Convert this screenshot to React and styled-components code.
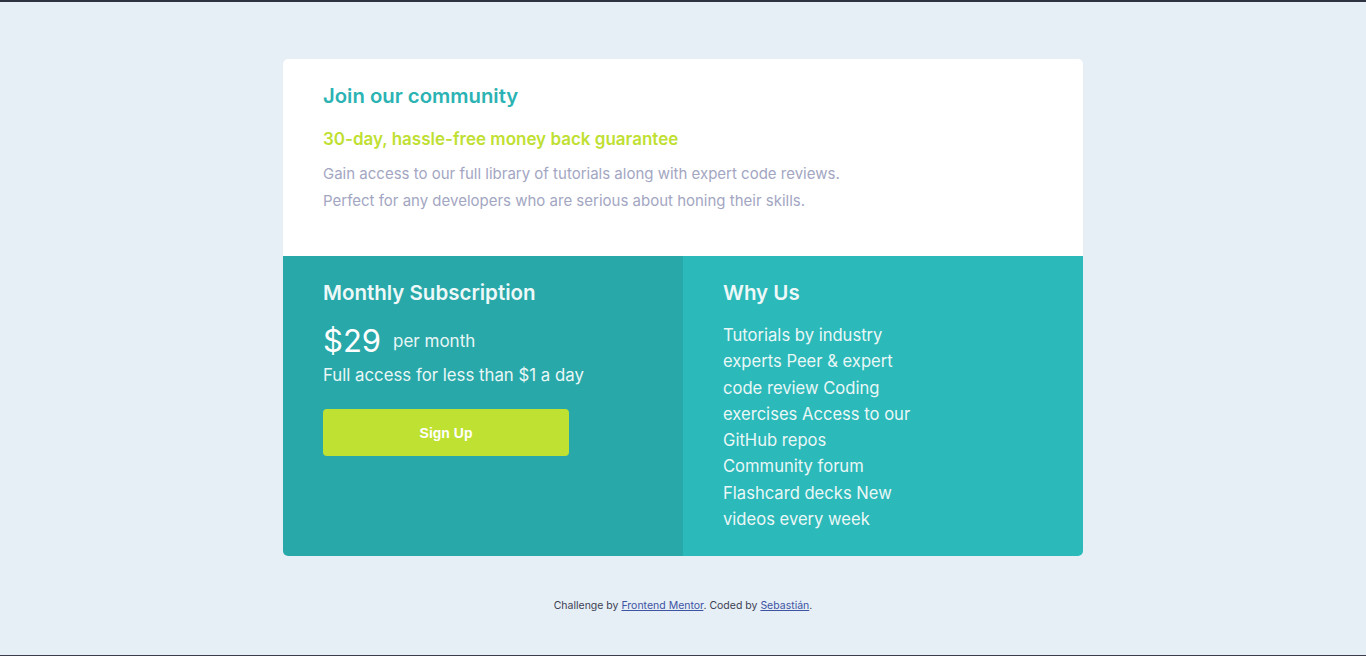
import React from "react";
import styled, { createGlobalStyle } from "styled-components";

const GlobalStyle = createGlobalStyle`
  html, body {
    margin: 0;
    padding: 0;
  }
  body {
    background: #e6eef6;
    font-family: "Inter", "Noto Sans", sans-serif;
  }
  * {
    box-sizing: border-box;
  }
`;

const whyUsLines = [
  "Tutorials by industry",
  "experts Peer & expert",
  "code review Coding",
  "exercises Access to our",
  "GitHub repos",
  "Community forum",
  "Flashcard decks New",
  "videos every week",
];

const App = () => {
  return (
    <>
      <GlobalStyle />
      <Page>
        <Card>
          <TopSection>
            <Title>Join our community</Title>
            <Guarantee>30-day, hassle-free money back guarantee</Guarantee>
            <Description>
              Gain access to our full library of tutorials along with expert
              code reviews.
              <br />
              Perfect for any developers who are serious about honing their
              skills.
            </Description>
          </TopSection>

          <BottomRow>
            {/* Subscription */}
            <Panel $bg="#28a8a8">
              <PanelTitle>Monthly Subscription</PanelTitle>
              <PriceRow>
                <Price>$29</Price>
                <PerMonth>per month</PerMonth>
              </PriceRow>
              <PanelText>Full access for less than $1 a day</PanelText>
              <SignUpButton>Sign Up</SignUpButton>
            </Panel>

            {/* Why us */}
            <Panel $bg="#2bb9b9">
              <PanelTitle>Why Us</PanelTitle>
              <WhyList>
                {whyUsLines.map((line) => (
                  <WhyLine key={line}>{line}</WhyLine>
                ))}
              </WhyList>
            </Panel>
          </BottomRow>
        </Card>

        <Attribution>
          Challenge by <FooterLink href="#">Frontend Mentor</FooterLink>. Coded
          by <FooterLink href="#">Sebastián</FooterLink>.
        </Attribution>
      </Page>
    </>
  );
};

export default App;

const Page = styled.div`
  min-height: 100vh;
  display: flex;
  flex-direction: column;
  align-items: center;
  padding-top: 57px;
  border-top: 2px solid #2d3340;
  border-bottom: 1px solid #3a3f4b;
`;

const Card = styled.div`
  width: 800px;
  border-radius: 5px;
  overflow: hidden;
  background: #ffffff;
`;

const TopSection = styled.div`
  padding: 25px 40px 42px;
`;

const Title = styled.h1`
  margin: 0 0 20px;
  font-size: 20.3px;
  line-height: 24px;
  font-weight: 600;
  color: #2bb3b4;
`;

const Guarantee = styled.h2`
  margin: 0 0 10px;
  font-size: 17px;
  line-height: 22px;
  font-weight: 600;
  color: #bfdf32;
`;

const Description = styled.p`
  margin: 0;
  font-size: 15px;
  line-height: 27px;
  color: #a3a6c2;
`;

const BottomRow = styled.div`
  display: grid;
  grid-template-columns: 1fr 1fr;
  height: 300px;
`;

const Panel = styled.div`
  background: ${(p) => p.$bg};
  padding: 25px 40px;
  color: #eef8f8;
`;

const PanelTitle = styled.h3`
  margin: 0;
  font-size: 20.5px;
  line-height: 24px;
  font-weight: 600;
  color: #eef8f8;
`;

const PriceRow = styled.div`
  display: flex;
  align-items: center;
  gap: 12px;
  height: 40px;
  margin-top: 15px;
`;

const Price = styled.span`
  font-size: 31px;
  color: #ffffff;
`;

const PerMonth = styled.span`
  font-size: 17px;
  color: #e8f6f6;
  padding-top: 1px;
`;

const PanelText = styled.p`
  margin: 3px 0 0;
  font-size: 16.8px;
  line-height: 24px;
  color: #eaf7f7;
`;

const SignUpButton = styled.button`
  display: block;
  margin-top: 22px;
  width: 246px;
  height: 47px;
  border: none;
  border-radius: 4px;
  background: #bfe132;
  color: #ffffff;
  font-family: "Liberation Sans", Arial, sans-serif;
  font-weight: 700;
  font-size: 14px;
  cursor: pointer;
`;

const WhyList = styled.div`
  margin-top: 17px;
`;

const WhyLine = styled.div`
  font-size: 16.6px;
  line-height: 26.3px;
  color: #eaf7f7;
`;

const Attribution = styled.p`
  margin: 42px 0 0;
  font-size: 10.5px;
  line-height: 15px;
  color: #3d3f52;
  text-align: center;
`;

const FooterLink = styled.a`
  color: #3e54a3;
`;
